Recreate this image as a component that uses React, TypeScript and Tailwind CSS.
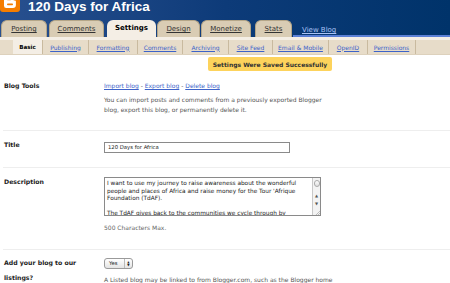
import React from 'react';

const tabs = [
  { label: 'Posting', w: 'w-[46px]', ml: 'ml-[1px]' },
  { label: 'Comments', w: 'w-[55px]', ml: 'ml-[2px]' },
  { label: 'Settings', w: 'w-[49px]', ml: 'ml-[3px]', active: true },
  { label: 'Design', w: 'w-[43px]', ml: 'ml-[1px]' },
  { label: 'Monetize', w: 'w-[50px]', ml: 'ml-[1px]' },
  { label: 'Stats', w: 'w-[37px]', ml: 'ml-[4px]' },
];

const subTabs = [
  { label: 'Publishing', w: 'w-[46px]' },
  { label: 'Formatting', w: 'w-[49px]' },
  { label: 'Comments', w: 'w-[45px]' },
  { label: 'Archiving', w: 'w-[46px]' },
  { label: 'Site Feed', w: 'w-[44px]' },
  { label: 'Email & Mobile', w: 'w-[56px]' },
  { label: 'OpenID', w: 'w-[39px]' },
  { label: 'Permissions', w: 'w-[48px]' },
];

const BloggerLogo = () => (
  <svg width="20" height="20" viewBox="0 0 20 20" className="-mt-[8px] shrink-0">
    <rect x="0" y="0" width="20" height="20" rx="3" fill="#f57d00" />
    <path
      d="M6 4h4.5a3 3 0 0 1 3 3v0.6a1 1 0 0 0 1 1h0.4a1 1 0 0 1 1 1V13a3 3 0 0 1-3 3H6.2a2.2 2.2 0 0 1-2.2-2.2V6.2A2.2 2.2 0 0 1 6 4z"
      fill="#fff"
    />
    <rect x="7" y="6.6" width="4" height="1.6" rx="0.8" fill="#f57d00" />
    <rect x="7" y="11.6" width="6" height="1.6" rx="0.8" fill="#f57d00" />
  </svg>
);

export default function App() {
  return (
    <div className="w-[450px] h-[283px] overflow-hidden bg-white font-['DejaVu_Sans',sans-serif] text-[#333]">
      {/* Header */}
      <div className="h-[37px] bg-gradient-to-r from-[#28508f] via-[#0d3b79] to-[#00336a] flex flex-col">
        <div className="h-[20px] flex items-start">
          <BloggerLogo />
          <span className="ml-[8px] font-['Liberation_Sans',sans-serif] font-bold text-[13.5px] leading-[13.5px] text-white">
            120 Days for Africa
          </span>
        </div>
        <div className="h-[17px] flex items-end">
          {tabs.map((t) => (
            <div
              key={t.label}
              className={`${t.w} ${t.ml} h-[17px] rounded-t-[6px] flex justify-center pt-[4px] text-[7px] leading-[9px] ${
                t.active
                  ? 'bg-[#f4eee5] font-bold text-[6.6px] text-black'
                  : 'bg-[#d9ccb4] border border-b-0 border-[#b5a688] text-[#333] underline'
              }`}
            >
              {t.label}
            </div>
          ))}
          <div className="flex-1 h-[17px] ml-[1px] border-b-2 border-[#5b80d6] pl-[9px] pt-[6px] text-[7px] leading-[9px] text-[#a9c2f5]">
            <span className="underline">View Blog</span>
          </div>
        </div>
      </div>

      {/* Sub navigation */}
      <div className="h-[3px] bg-[#f4eee5]" />
      <div className="h-[15px] bg-[#e7dcc9] flex border-b border-[#ddd1bc]">
        <div className="w-[13px]" />
        <div className="w-[29px] bg-[#f4eee5] flex items-center justify-center text-[5.6px] font-bold text-black">
          Basic
        </div>
        {subTabs.map((s) => (
          <div
            key={s.label}
            className={`${s.w} border-l border-[#c9ba9f] flex items-center justify-center text-[6px] text-[#3d63c9] underline`}
          >
            {s.label}
          </div>
        ))}
        <div className="flex-1 border-l border-[#c9ba9f]" />
      </div>

      {/* Saved message */}
      <div className="mt-[2px] ml-[208px] w-[124px] h-[14px] rounded-[2px] bg-[#fdd35c] flex items-center justify-center text-[6px] font-bold text-[#333]">
        Settings Were Saved Successfully
      </div>

      {/* Blog Tools */}
      <div className="ml-[3px] grid grid-cols-[101px_1fr] pt-[10px] pb-[15px] border-b border-[#eeeeee]">
        <div className="pl-[1px] text-[6.2px] leading-[10px] font-bold text-[#222]">Blog Tools</div>
        <div className="text-[6px] leading-[10px]">
          <div>
            <span className="text-[#3d63c9] underline">Import blog</span>
            <span className="text-[#555]"> - </span>
            <span className="text-[#3d63c9] underline">Export blog</span>
            <span className="text-[#555]"> - </span>
            <span className="text-[#3d63c9] underline">Delete blog</span>
          </div>
          <div className="mt-[4px] text-[#555] w-[230px]">
            You can import posts and comments from a previously exported Blogger
            <br />
            blog, export this blog, or permanently delete it.
          </div>
        </div>
      </div>

      {/* Title */}
      <div className="ml-[3px] grid grid-cols-[101px_1fr] pt-[11px] pb-[14px] border-b border-[#eeeeee]">
        <div className="pl-[1px] -mt-[2px] text-[6.2px] leading-[10px] font-bold text-[#222]">Title</div>
        <div className="w-[186px] h-[11px] border border-[#8a8a8a] bg-white pl-[3px] flex items-center text-[5.3px] text-[#222]">
          120 Days for Africa
        </div>
      </div>

      {/* Description */}
      <div className="ml-[3px] grid grid-cols-[101px_1fr] pt-[9px] pb-[16px] border-b border-[#eeeeee]">
        <div className="pl-[1px] text-[6.2px] leading-[10px] font-bold text-[#222]">Description</div>
        <div>
          <div className="relative w-[217px] h-[39px] border border-[#8a8a8a] bg-white overflow-hidden flex">
            <div className="flex-1 pl-[2px] pt-[2px] text-[5.8px] leading-[7.5px] text-[#222] whitespace-nowrap">
              <div>I want to use my journey to raise awareness about the wonderful</div>
              <div>people and places of Africa and raise money for the Tour 'Afrique</div>
              <div>Foundation (TdAF).</div>
              <div>&nbsp;</div>
              <div>The TdAF gives back to the communities we cycle through by</div>
            </div>
            <div className="w-[8px] border-l border-[#c8c8c8] bg-[#f3f3f3] flex flex-col items-center">
              <div className="mt-[2px] w-[6px] h-[7px] rounded-full border border-[#aaa] bg-gradient-to-b from-white to-[#ddd]" />
              <div className="mt-[6px] text-[4px] leading-[5px] text-[#555]">▲</div>
              <div className="mt-[3px] text-[4px] leading-[5px] text-[#555]">▼</div>
            </div>
            <svg width="5" height="5" viewBox="0 0 5 5" className="absolute right-0 bottom-0">
              <path d="M1 5L5 1M3 5L5 3" stroke="#999" strokeWidth="0.6" />
            </svg>
          </div>
          <div className="mt-[7px] text-[6px] leading-[10px] text-[#666]">500 Characters Max.</div>
        </div>
      </div>

      {/* Listings */}
      <div className="ml-[3px] grid grid-cols-[101px_1fr] pt-[8px]">
        <div className="pl-[1px] -mt-[3px] text-[6.2px] leading-[15px] font-bold text-[#222]">
          Add your blog to our
          <br />
          listings?
        </div>
        <div>
          <div className="w-[29px] h-[11px] rounded-[3px] border border-[#9a9a9a] bg-gradient-to-b from-white to-[#e4e4e4] flex items-center text-[5.3px] text-[#222]">
            <span className="pl-[4px] w-[19px]">Yes</span>
            <div className="h-full border-l border-[#bbb] flex-1 flex flex-col items-center justify-center">
              <span className="text-[3px] leading-[3px]">▲</span>
              <span className="text-[3px] leading-[3px]">▼</span>
            </div>
          </div>
          <div className="mt-[6px] text-[6px] leading-[10px] text-[#555] whitespace-nowrap">
            A Listed blog may be linked to from Blogger.com, such as the Blogger home
          </div>
        </div>
      </div>
    </div>
  );
}
